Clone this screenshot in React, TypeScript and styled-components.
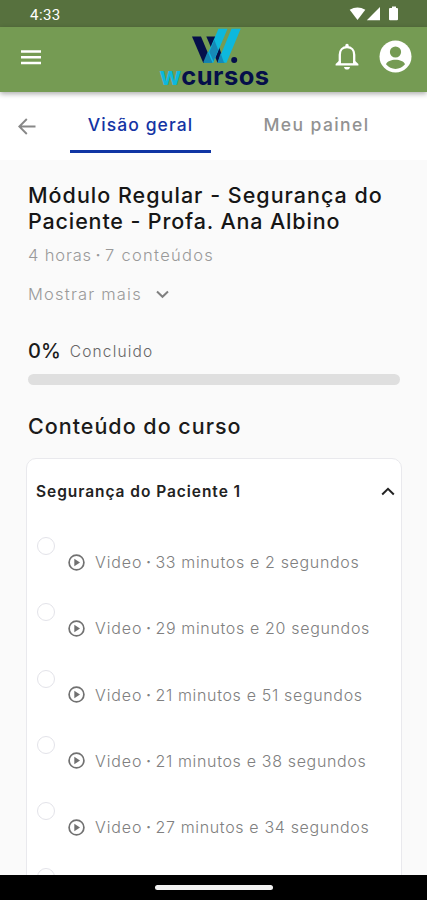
import React from "react";
import styled, { createGlobalStyle } from "styled-components";

const GlobalStyle = createGlobalStyle`
  * { box-sizing: border-box; }
  body { margin: 0; background: #fafafa; font-family: Inter, "Open Sans", sans-serif; }
`;

const Screen = styled.div`
  display: flex;
  flex-direction: column;
  width: 427px;
  height: 900px;
  overflow: hidden;
  background: #fafafa;
`;

const StatusBar = styled.div`
  display: flex;
  flex: none;
  align-items: center;
  justify-content: space-between;
  height: 27px;
  padding: 1px 29px 0 30px;
  background: #57713e;
  color: #fff;
`;

const Clock = styled.span`
  font: 400 15px/20px Roboto, sans-serif;
  letter-spacing: 0.45px;
  padding-top: 1px;
`;

const AppBar = styled.header`
  display: grid;
  flex: none;
  grid-template-columns: 1fr 114px 1fr;
  height: 65px;
  padding: 0 15px 0 21px;
  background: #759b53;
  box-shadow: 0 2px 5px rgba(0, 0, 0, 0.32);
  z-index: 1;
`;

const MenuSlot = styled.div`
  display: flex;
  align-items: flex-start;
  padding-top: 23px;
`;

const Brand = styled.div`
  display: flex;
  flex-direction: column;
  align-items: center;
  margin-left: -2px;
  margin-right: 2px;
`;

const BrandMark = styled.svg`
  display: block;
  margin-top: 1px;
`;

const BrandName = styled.div`
  margin-top: -4px;
  font: 700 25.5px/29px Inter, sans-serif;
  letter-spacing: 0.45px;
  color: #050f4a;
`;

const BrandAccent = styled.span`
  color: #0db8dd;
`;

const Actions = styled.div`
  display: flex;
  align-items: center;
  justify-content: flex-end;
  gap: 20px;
  padding-bottom: 6px;
`;

const Tabs = styled.nav`
  display: flex;
  flex: none;
  height: 68px;
  background: #fff;
`;

const Back = styled.div`
  width: 70px;
  padding: 26px 0 0 18px;
`;

const Tab = styled.div<{ $active?: boolean }>`
  width: 141px;
  height: 61px;
  margin-right: 35px;
  padding-top: 21px;
  border-bottom: 3.5px solid ${(p) => (p.$active ? "#1237a5" : "transparent")};
  text-align: center;
  white-space: nowrap;
  font-weight: 500;
  font-size: 17.5px;
  line-height: 24px;
  letter-spacing: ${(p) => (p.$active ? "1.1px" : "1.4px")};
  color: ${(p) => (p.$active ? "#1434a4" : "#929292")};
`;

const Content = styled.main`
  display: flex;
  flex: 1;
  min-height: 0;
  flex-direction: column;
  padding: 22px 26px 0 28px;
  overflow: hidden;
`;

const Title = styled.h1`
  flex: none;
  margin: 0;
  font-weight: 500;
  font-size: 21.5px;
  line-height: 26px;
  color: #161616;
  white-space: nowrap;
`;

const TitleLine = styled.span<{ $spacing: number }>`
  display: block;
  letter-spacing: ${(p) => p.$spacing}px;
`;

const Meta = styled.div`
  display: flex;
  align-items: center;
  flex: none;
  margin-top: 9px;
  font-size: 16.5px;
  font-weight: 300;
  line-height: 24px;
  letter-spacing: 0.85px;
  color: #999;
`;

const MetaCount = styled.span`
  letter-spacing: 1.3px;
`;

const Bullet = styled.span`
  width: 13px;
  padding-right: 1px;
  font-size: 9px;
  letter-spacing: 0;
  text-align: center;
`;

const ShowMore = styled.div`
  display: flex;
  flex: none;
  align-items: center;
  gap: 14px;
  margin-top: 15px;
  font-size: 16.5px;
  font-weight: 300;
  line-height: 24px;
  letter-spacing: 1.2px;
  color: #999;
`;

const Progress = styled.div`
  display: flex;
  flex: none;
  align-items: center;
  gap: 9px;
  height: 26px;
  margin-top: 32px;
`;

const Percent = styled.span`
  font-size: 20px;
  font-weight: 500;
  color: #1b1b1b;
`;

const ProgressLabel = styled.span`
  font-size: 15.5px;
  font-weight: 300;
  letter-spacing: 1.15px;
  color: #666;
`;

const Track = styled.div`
  flex: none;
  width: 372px;
  height: 11px;
  margin-top: 10px;
  border-radius: 6px;
  background: #dfdfdf;
`;

const SectionTitle = styled.h2`
  flex: none;
  margin: 27px 0 0;
  font-size: 21.5px;
  font-weight: 500;
  line-height: 28px;
  letter-spacing: 1px;
  color: #1b1b1b;
`;

const Card = styled.section`
  flex: none;
  width: 376px;
  height: 520px;
  margin: 18px 0 0 -2px;
  border: 1.5px solid #e9e9ed;
  border-radius: 10px;
  background: #fff;
`;

const CardHeader = styled.div`
  display: flex;
  align-items: center;
  justify-content: space-between;
  height: 65px;
  padding: 0 6px 0 9px;
  font-size: 15.5px;
  font-weight: 600;
  letter-spacing: 0.95px;
  color: #222;
`;

const Lesson = styled.div`
  display: flex;
  align-items: flex-start;
  height: 66.25px;
  padding: 13px 0 0 10px;
`;

const Check = styled.div`
  width: 18px;
  height: 18px;
  border: 1.5px solid #e3e3e9;
  border-radius: 50%;
`;

const LessonInfo = styled.div`
  display: flex;
  align-items: center;
  gap: 10px;
  margin: 12px 0 0 13px;
  height: 26px;
`;

const LessonText = styled.span`
  display: flex;
  align-items: center;
  font-size: 16px;
  font-weight: 300;
  line-height: 24px;
  letter-spacing: 0.66px;
  white-space: nowrap;
  color: #808080;
`;

const LessonKind = styled.span`
  letter-spacing: 0.9px;
`;

const NavBar = styled.div`
  display: flex;
  flex: none;
  justify-content: center;
  height: 25px;
  padding-top: 9.5px;
  background: #000;
`;

const HomePill = styled.div`
  width: 118px;
  height: 5px;
  border-radius: 3px;
  background: #f2f2f2;
`;

const durations = [
  "33 minutos e 2 segundos",
  "29 minutos e 20 segundos",
  "21 minutos e 51 segundos",
  "21 minutos e 38 segundos",
  "27 minutos e 34 segundos",
];

const PlayIcon = () => (
  <svg width="17" height="17" viewBox="0 0 17 17">
    <circle cx="8.5" cy="8.5" r="7.4" fill="none" stroke="#717171" strokeWidth="1.7" />
    <path d="M6.3 4.7v7.6l5.7-3.8z" fill="#717171" />
  </svg>
);

const StatusIcons = () => (
  <svg width="49" height="16" viewBox="0 0 49 16">
    <path d="M0.7 3.8Q8.5-1 16.3 3.8L8.5 14z" fill="#fff" />
    <path d="M31 1v13.3H17.8z" fill="#fff" />
    <path d="M41 2h2V.5h4V2h1q1 0 1 1v10.3q0 1-1 1h-7q-1 0-1-1V3q0-1 1-1z" fill="#fff" />
  </svg>
);

export default function App() {
  return (
    <>
      <GlobalStyle />
      <Screen>
        <StatusBar>
          <Clock>4:33</Clock>
          <StatusIcons />
        </StatusBar>
        <AppBar>
          <MenuSlot>
            <svg width="20" height="15" viewBox="0 0 20 15">
              <path d="M0 1.5h20M0 7.3h20M0 13.1h20" stroke="#fff" strokeWidth="2.5" />
            </svg>
          </MenuSlot>
          <Brand>
            <BrandMark width="52" height="37" viewBox="0 0 52 37">
              <path d="M3 8.5h9l11 26.3h-8.8z" fill="#050f4a" />
              <path d="M17.3 8.5h9l9.3 26.3h-7z" fill="#050f4a" />
              <path d="M29.5.8h9L24.3 34.8h-9.5z" fill="#0db8dd" />
              <path d="M42.5.8h9.2L37.5 34.8h-9z" fill="#0db8dd" />
              <path d="M18.7 23.4l4.8 11.4h-8.7l-.4-.8z" fill="#1682ad" />
              <path d="M25.3 11.8l3.9 10.2-4.7 11.4-4.1-9.5z" fill="#1689b7" />
              <path d="M31.6 25l3.4 9.8h-6.4z" fill="#1689b7" />
              <circle cx="45.2" cy="31.9" r="3" fill="#050f4a" />
            </BrandMark>
            <BrandName>
              <BrandAccent>w</BrandAccent>cursos
            </BrandName>
          </Brand>
          <Actions>
            <svg width="24" height="27" viewBox="0 0 24 27">
              <path
                d="M4.8 20V11.7C4.8 7.2 7.6 4.2 12 4.2s7.2 3 7.2 7.5V20"
                fill="none"
                stroke="#fff"
                strokeWidth="2.3"
              />
              <path d="M.6 22.6v-1.5l3.2-3h16.4l3.2 3v1.5z" fill="#fff" />
              <path d="M6 17h12v3.2H6z" fill="#759b53" />
              <path d="M9 24h6c-.2 3.4-5.8 3.4-6 0z" fill="#fff" />
              <rect x="10.3" y=".8" width="3.4" height="4" rx="1.6" fill="#fff" />
            </svg>
            <svg width="33" height="33" viewBox="0 0 33 33">
              <circle cx="16.5" cy="16.5" r="16" fill="#fff" />
              <circle cx="16.5" cy="12" r="5.6" fill="#759b53" />
              <path d="M7 24.3c2-6 17-6 19 0-5 6.2-14 6.2-19 0z" fill="#759b53" />
            </svg>
          </Actions>
        </AppBar>
        <Tabs>
          <Back>
            <svg width="18" height="17" viewBox="0 0 18 17">
              <path d="M17.5 8.5H1.5M8.8 1L1.3 8.5 8.8 16" fill="none" stroke="#888" strokeWidth="1.9" />
            </svg>
          </Back>
          <Tab $active>Visão geral</Tab>
          <Tab>Meu painel</Tab>
        </Tabs>
        <Content>
          <Title>
            <TitleLine $spacing={1}>Módulo Regular - Segurança do</TitleLine>
            <TitleLine $spacing={0.85}>Paciente - Profa. Ana Albino</TitleLine>
          </Title>
          <Meta>
            4 horas<Bullet>•</Bullet>
            <MetaCount>7 conteúdos</MetaCount>
          </Meta>
          <ShowMore>
            Mostrar mais
            <svg width="13" height="9" viewBox="0 0 13 9">
              <path d="M1 1.5l5.5 5.3L12 1.5" fill="none" stroke="#808080" strokeWidth="2" />
            </svg>
          </ShowMore>
          <Progress>
            <Percent>0%</Percent>
            <ProgressLabel>Concluido</ProgressLabel>
          </Progress>
          <Track />
          <SectionTitle>Conteúdo do curso</SectionTitle>
          <Card>
            <CardHeader>
              Segurança do Paciente 1
              <svg width="14" height="9" viewBox="0 0 14 9">
                <path d="M1.2 7.5L7 1.8l5.8 5.7" fill="none" stroke="#222" strokeWidth="2" />
              </svg>
            </CardHeader>
            {durations.map((duration) => (
              <Lesson key={duration}>
                <Check />
                <LessonInfo>
                  <PlayIcon />
                  <LessonText>
                    <LessonKind>Video</LessonKind>
                    <Bullet>•</Bullet>
                    {duration}
                  </LessonText>
                </LessonInfo>
              </Lesson>
            ))}
            <Lesson>
              <Check />
            </Lesson>
          </Card>
        </Content>
        <NavBar>
          <HomePill />
        </NavBar>
      </Screen>
    </>
  );
}
